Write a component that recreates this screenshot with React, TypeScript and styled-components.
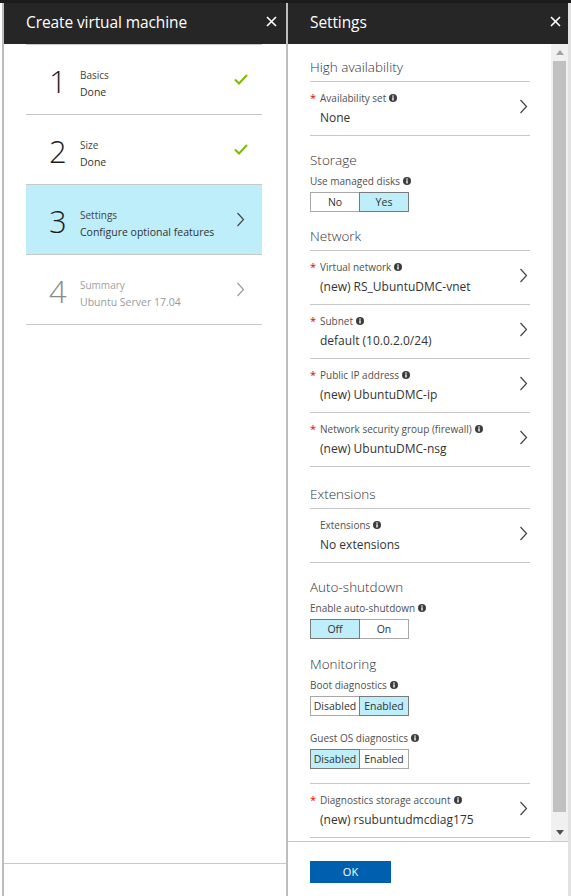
import React from "react";
import styled, { createGlobalStyle } from "styled-components";

const GlobalStyle = createGlobalStyle`
  html, body {
    margin: 0;
    padding: 0;
    background: #ffffff;
  }
  body {
    font-family: "Open Sans", "Noto Sans", "Liberation Sans", sans-serif;
    color: #333333;
    -webkit-font-smoothing: antialiased;
  }
  * {
    box-sizing: border-box;
  }
`;

type StepState = "done" | "active" | "pending";

const steps: { n: string; title: string; sub: string; state: StepState }[] = [
  { n: "1", title: "Basics", sub: "Done", state: "done" },
  { n: "2", title: "Size", sub: "Done", state: "done" },
  { n: "3", title: "Settings", sub: "Configure optional features", state: "active" },
  { n: "4", title: "Summary", sub: "Ubuntu Server 17.04", state: "pending" },
];

const CloseIcon = () => (
  <svg width="11" height="11" viewBox="0 0 11 11">
    <path d="M1 1 L10 10 M10 1 L1 10" stroke="#ffffff" strokeWidth="1.6" fill="none" />
  </svg>
);

const Chevron = ({ color = "#444444" }: { color?: string }) => (
  <svg width="9" height="15" viewBox="0 0 9 15">
    <path d="M1.5 1 L7.5 7.5 L1.5 14" stroke={color} strokeWidth="1.2" fill="none" />
  </svg>
);

const Check = () => (
  <svg width="14" height="11" viewBox="0 0 14 11">
    <path d="M1 5.5 L5 9.5 L13 1" stroke="#7fba00" strokeWidth="2" fill="none" />
  </svg>
);

const Info = () => (
  <InfoWrap>
    <svg width="8" height="8" viewBox="0 0 8 8">
      <circle cx="4" cy="4" r="4" fill="#3c3c3c" />
      <rect x="3.3" y="3.3" width="1.4" height="3.2" fill="#ffffff" />
      <rect x="3.3" y="1.4" width="1.4" height="1.3" fill="#ffffff" />
    </svg>
  </InfoWrap>
);

const Arrow = ({ up }: { up?: boolean }) => (
  <svg width="8" height="5" viewBox="0 0 8 5">
    <path d={up ? "M0 5 L4 0 L8 5 Z" : "M0 0 L4 5 L8 0 Z"} fill={up ? "#a3a3a3" : "#505050"} />
  </svg>
);

type Field = { label: string; value: string; required?: boolean };

const FieldRow = ({ label, value, required }: Field) => (
  <Row>
    <RowText>
      <Label>
        {required ? <Star>*</Star> : <StarSpace />}
        {label}
        <Info />
      </Label>
      <Value>{value}</Value>
    </RowText>
    <RowChevron>
      <Chevron />
    </RowChevron>
  </Row>
);

const Toggle = ({ options, selected }: { options: string[]; selected: number }) => (
  <ToggleGroup>
    {options.map((o, i) => (
      <ToggleOption key={o} $on={i === selected} $first={i === 0}>
        {o}
      </ToggleOption>
    ))}
  </ToggleGroup>
);

export default function App() {
  return (
    <Page>
      <GlobalStyle />
      <LeftBlade>
        <Header>
          <HeaderTitle>Create virtual machine</HeaderTitle>
          <CloseIcon />
        </Header>
        <StepList>
          {steps.map((s) => (
            <StepRow key={s.n} $state={s.state}>
              <StepNumber $state={s.state}>{s.n}</StepNumber>
              <StepText>
                <StepTitle $state={s.state}>{s.title}</StepTitle>
                <StepSub $state={s.state}>{s.sub}</StepSub>
              </StepText>
              {s.state === "done" ? (
                <CheckWrap>
                  <Check />
                </CheckWrap>
              ) : (
                <Chevron color={s.state === "pending" ? "#9a9a9a" : "#444444"} />
              )}
            </StepRow>
          ))}
        </StepList>
        <LeftFooter />
      </LeftBlade>

      <RightBlade>
        <Header $right>
          <HeaderTitle>Settings</HeaderTitle>
          <CloseIcon />
        </Header>
        <ScrollArea>
          <Content>
            <Section $gap={13}>
              <SectionTitle $ruled>High availability</SectionTitle>
              <FieldRow required label="Availability set" value="None" />
            </Section>

            <Section $gap={14}>
              <SectionTitle>Storage</SectionTitle>
              <SmallLabel>
                Use managed disks
                <Info />
              </SmallLabel>
              <Toggle options={["No", "Yes"]} selected={1} />
            </Section>

            <Section $gap={14}>
              <SectionTitle $ruled>Network</SectionTitle>
              <FieldRow required label="Virtual network" value="(new) RS_UbuntuDMC-vnet" />
              <FieldRow required label="Subnet" value="default (10.0.2.0/24)" />
              <FieldRow required label="Public IP address" value="(new) UbuntuDMC-ip" />
              <FieldRow
                required
                label="Network security group (firewall)"
                value="(new) UbuntuDMC-nsg"
              />
            </Section>

            <Section $gap={17}>
              <SectionTitle $ruled>Extensions</SectionTitle>
              <FieldRow label="Extensions" value="No extensions" />
            </Section>

            <Section $gap={14}>
              <SectionTitle>Auto-shutdown</SectionTitle>
              <SmallLabel>
                Enable auto-shutdown
                <Info />
              </SmallLabel>
              <Toggle options={["Off", "On"]} selected={0} />
            </Section>

            <Section $gap={15}>
              <SectionTitle>Monitoring</SectionTitle>
              <SmallLabel>
                Boot diagnostics
                <Info />
              </SmallLabel>
              <Toggle options={["Disabled", "Enabled"]} selected={1} />
              <SmallLabel $spaced>
                Guest OS diagnostics
                <Info />
              </SmallLabel>
              <Toggle options={["Disabled", "Enabled"]} selected={0} />
              <RuledGroup>
                <FieldRow
                  required
                  label="Diagnostics storage account"
                  value="(new) rsubuntudmcdiag175"
                />
              </RuledGroup>
            </Section>
          </Content>
          <ScrollBar>
            <ScrollButton>
              <Arrow up />
            </ScrollButton>
            <Thumb />
            <ScrollButton>
              <Arrow />
            </ScrollButton>
          </ScrollBar>
        </ScrollArea>
        <Footer>
          <OkButton>OK</OkButton>
        </Footer>
      </RightBlade>
    </Page>
  );
}

const Page = styled.div`
  display: flex;
  width: 571px;
  height: 896px;
  padding-left: 2px;
  border-top: 3px solid #1b1b1b;
  overflow: hidden;
`;

const LeftBlade = styled.div`
  display: flex;
  flex-direction: column;
  width: 286px;
  border-left: 2px solid #bdbdbd;
  border-right: 2px solid #bdbdbd;
`;

const RightBlade = styled.div`
  display: flex;
  flex-direction: column;
  flex: 1;
  border-right: 3px solid #e2e2e2;
`;

const Header = styled.div<{ $right?: boolean }>`
  display: flex;
  align-items: center;
  justify-content: space-between;
  height: 41px;
  flex-shrink: 0;
  background: #262626;
  padding: 0 ${(p) => (p.$right ? "7px" : "9px")} 4px 22px;
`;

const HeaderTitle = styled.div`
  font-size: 15.5px;
  color: #ffffff;
  letter-spacing: -0.1px;
`;

const StepList = styled.div`
  margin: 0 24px 0 22px;
  border-top: 1px solid #c8c8c8;
  flex: 1;
`;

const StepRow = styled.div<{ $state: StepState }>`
  display: flex;
  align-items: center;
  height: 70px;
  padding: 0 17px 0 23px;
  border-bottom: 1px solid #c8c8c8;
  background: ${(p) => (p.$state === "active" ? "#bdeef9" : "transparent")};
`;

const StepNumber = styled.div<{ $state: StepState }>`
  width: 31px;
  margin-top: 3px;
  font-size: 31px;
  font-weight: 300;
  line-height: 36px;
  color: ${(p) => (p.$state === "pending" ? "#8a8a8a" : "#1e1e1e")};
`;

const StepText = styled.div`
  flex: 1;
  margin-top: 9px;
`;

const StepTitle = styled.div<{ $state: StepState }>`
  font-size: 10px;
  line-height: 17px;
  color: ${(p) => (p.$state === "pending" ? "#a0a0a0" : "#444444")};
`;

const StepSub = styled.div<{ $state: StepState }>`
  font-size: 10.5px;
  line-height: 17px;
  color: ${(p) => (p.$state === "pending" ? "#9a9a9a" : "#333333")};
`;

const CheckWrap = styled.span`
  display: inline-flex;
  margin-right: -3px;
`;

const LeftFooter = styled.div`
  height: 33px;
  flex-shrink: 0;
  border-top: 1px solid #c8c8c8;
`;

const ScrollArea = styled.div`
  display: flex;
  flex: 1;
  min-height: 0;
`;

const Content = styled.div`
  flex: 1;
  padding: 0 21px 0 22px;
  overflow: hidden;
`;

const Section = styled.div<{ $gap: number }>`
  margin-top: ${(p) => p.$gap}px;
`;

const SectionTitle = styled.div<{ $ruled?: boolean }>`
  font-size: 13.5px;
  line-height: 20px;
  font-weight: 300;
  color: #333333;
  padding-bottom: ${(p) => (p.$ruled ? "4px" : "0")};
  border-bottom: ${(p) => (p.$ruled ? "1px solid #c8c8c8" : "none")};
`;

const RuledGroup = styled.div`
  margin-top: 14px;
  border-top: 1px solid #c8c8c8;
`;

const Row = styled.div`
  display: flex;
  align-items: center;
  height: 54px;
  padding: 1px 2px 0 0;
  border-bottom: 1px solid #c8c8c8;
`;

const RowText = styled.div`
  flex: 1;
  min-width: 0;
`;

const RowChevron = styled.span`
  display: inline-flex;
  margin-bottom: 5px;
`;

const Label = styled.div`
  display: flex;
  align-items: center;
  font-size: 10px;
  line-height: 14px;
  color: #505050;
`;

const Star = styled.span`
  width: 10px;
  color: #e00000;
  font-size: 11px;
`;

const StarSpace = styled.span`
  width: 10px;
`;

const InfoWrap = styled.span`
  display: inline-flex;
  margin-left: 3px;
`;

const Value = styled.div`
  margin-top: 4px;
  padding-left: 10px;
  font-size: 12px;
  line-height: 18px;
  color: #333333;
  white-space: nowrap;
`;

const SmallLabel = styled.div<{ $spaced?: boolean }>`
  display: flex;
  align-items: center;
  margin-top: ${(p) => (p.$spaced ? "15px" : "4px")};
  font-size: 10px;
  line-height: 14px;
  color: #505050;
`;

const ToggleGroup = styled.div`
  display: flex;
  margin-top: 4px;
`;

const ToggleOption = styled.div<{ $on: boolean; $first: boolean }>`
  width: 50px;
  height: 20px;
  display: flex;
  align-items: center;
  justify-content: center;
  font-size: 10.5px;
  color: #333333;
  border: 1px solid ${(p) => (p.$on ? "#7a7a7a" : "#a8a8a8")};
  margin-left: ${(p) => (p.$first ? "0" : "-1px")};
  background: ${(p) => (p.$on ? "#bdeef9" : "#ffffff")};
  position: relative;
  z-index: ${(p) => (p.$on ? 1 : 0)};
`;

const ScrollBar = styled.div`
  display: flex;
  flex-direction: column;
  width: 17px;
  background: #f0f0f0;
`;

const ScrollButton = styled.div`
  height: 17px;
  display: flex;
  align-items: center;
  justify-content: center;
`;

const Thumb = styled.div`
  flex: 1;
  margin: 0 2px 12px 2px;
  background: #c1c1c1;
`;

const Footer = styled.div`
  height: 55px;
  flex-shrink: 0;
  border-top: 1px solid #c8c8c8;
  padding: 17px 0 0 22px;
`;

const OkButton = styled.button`
  width: 81px;
  height: 22px;
  border: none;
  background: #0060b0;
  color: #ffffff;
  font-family: "Open Sans", "Noto Sans", sans-serif;
  font-size: 11px;
  padding: 0;
`;
